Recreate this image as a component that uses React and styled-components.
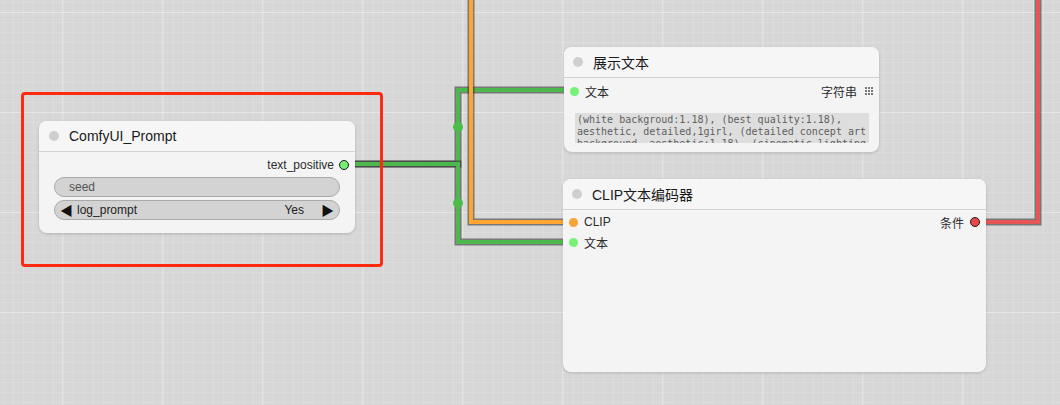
import React from "react";
import styled, { createGlobalStyle } from "styled-components";

const GlobalStyle = createGlobalStyle`
  html, body {
    margin: 0;
    padding: 0;
    overflow: hidden;
  }
  body {
    font-family: "Liberation Sans", "Noto Sans CJK SC", sans-serif;
  }
`;

const Canvas = styled.div`
  position: relative;
  width: 1060px;
  height: 405px;
  overflow: hidden;
  background-color: #d7d7d7;
  background-image:
    linear-gradient(to right, rgba(255, 255, 255, 0.28) 1px, transparent 1px),
    linear-gradient(to bottom, rgba(255, 255, 255, 0.28) 1px, transparent 1px),
    linear-gradient(to right, rgba(255, 255, 255, 0.12) 1px, transparent 1px),
    linear-gradient(to bottom, rgba(255, 255, 255, 0.12) 1px, transparent 1px);
  background-size: 100px 100px, 100px 100px, 10px 10px, 10px 10px;
  background-position: 62px 12px, 62px 12px, 3px 2px, 3px 2px;
`;

const Wires = styled.svg`
  position: absolute;
  left: 0;
  top: 0;
  width: 1060px;
  height: 405px;
`;

const Node = styled.div`
  position: absolute;
  left: ${(p) => p.$x}px;
  top: ${(p) => p.$y}px;
  width: ${(p) => p.$w}px;
  height: ${(p) => p.$h}px;
  display: flex;
  flex-direction: column;
  background: #f4f4f4;
  border-radius: 8px;
  box-shadow: 0 1px 3px rgba(0, 0, 0, 0.18);
  overflow: hidden;
`;

const Header = styled.div`
  height: 30px;
  flex: none;
  display: flex;
  align-items: center;
  gap: 10px;
  padding-left: ${(p) => p.$pad || 9}px;
  background: #f6f6f6;
  border-bottom: 1px solid #d2d2d2;
  font-size: 14px;
  color: #1a1a1a;
`;

const TitleDot = styled.span`
  width: 10px;
  height: 10px;
  border-radius: 50%;
  background: #cfcfcf;
`;

const Body = styled.div`
  display: flex;
  flex-direction: column;
  padding: ${(p) => p.$top || 3}px 0 0;
`;

const SlotRow = styled.div`
  height: 20px;
  display: flex;
  align-items: center;
  justify-content: space-between;
  font-size: 12px;
  color: #2b2b2b;
`;

const Slot = styled.div`
  display: flex;
  align-items: center;
  gap: ${(p) => p.$gap || 6}px;
  padding: 0 ${(p) => (p.$right ? 6 : 0)}px 0 ${(p) => (p.$right ? 0 : 6)}px;
`;

const Dot = styled.span`
  width: ${(p) => (p.$out ? 8 : 9)}px;
  height: ${(p) => (p.$out ? 8 : 9)}px;
  border-radius: 50%;
  background: ${(p) => p.$color};
  border: ${(p) => (p.$out ? "1px solid #1e1e1e" : "none")};
`;

const GridIcon = styled.span`
  display: grid;
  grid-template-columns: repeat(3, 2px);
  gap: 1px;
  margin-left: 2px;
  span {
    width: 2px;
    height: 2px;
    background: #777;
  }
`;

const Widgets = styled.div`
  display: flex;
  flex-direction: column;
  gap: 3px;
  padding: 2px 15px 0;
`;

const Widget = styled.div`
  height: 20px;
  box-sizing: border-box;
  display: flex;
  align-items: center;
  justify-content: space-between;
  padding: 0 ${(p) => (p.$combo ? 5 : 14)}px;
  border-radius: 10px;
  background: #d3d3d3;
  border: 1px solid #a9a9a9;
  font-size: 12px;
  color: ${(p) => (p.$combo ? "#222" : "#555")};
`;

const Arrow = styled.span`
  font-size: 13px;
  line-height: 1;
  color: #111;
`;

const ComboSide = styled.span`
  display: flex;
  align-items: center;
  gap: ${(p) => p.$gap}px;
`;

const TextArea = styled.div`
  margin: 12px 10px 0 11px;
  height: 29px;
  overflow: hidden;
  background: #dedede;
  padding: 1px 2px 0;
  font-family: "DejaVu Sans Mono", "Liberation Mono", monospace;
  font-size: 10px;
  line-height: 12px;
  color: #5e5e5e;
  white-space: pre;
`;

const Highlight = styled.div`
  position: absolute;
  left: 21px;
  top: 92px;
  width: 362px;
  height: 175px;
  box-sizing: border-box;
  border: 3px solid #ff2a10;
  border-radius: 4px;
`;

const Wire = ({ d, color }) => (
  <g fill="none" strokeLinejoin="miter">
    <path d={d} stroke="rgba(40,40,40,0.55)" strokeWidth="7" />
    <path d={d} stroke={color} strokeWidth="4" />
  </g>
);

const GREEN = "#4db84d";
const ORANGE = "#ffa531";
const RED = "#e55757";

export default function App() {
  return (
    <>
      <GlobalStyle />
      <Canvas>
        <Wires viewBox="0 0 1060 405">
          <Wire d="M350 164 H458 V90 H574" color={GREEN} />
          <Wire d="M350 164 H458 V242 H572" color={GREEN} />
          <Wire d="M471 -5 V222 H572" color={ORANGE} />
          <Wire d="M976 222 H1038 V-5" color={RED} />
          <circle cx="458" cy="127" r="5" fill="#4cbc4c" />
          <circle cx="458" cy="203" r="5" fill="#4cbc4c" />
        </Wires>

        <Node $x={39} $y={121} $w={316} $h={112}>
          <Header $pad={10}>
            <TitleDot />
            ComfyUI_Prompt
          </Header>
          <Body>
            <SlotRow>
              <span />
              <Slot $right $gap={5}>
                text_positive
                <Dot $out $color="#74ee74" />
              </Slot>
            </SlotRow>
            <Widgets>
              <Widget>seed</Widget>
              <Widget $combo>
                <ComboSide $gap={4}>
                  <Arrow>◀</Arrow>log_prompt
                </ComboSide>
                <ComboSide $gap={17}>
                  Yes<Arrow>▶</Arrow>
                </ComboSide>
              </Widget>
            </Widgets>
          </Body>
        </Node>

        <Node $x={564} $y={47} $w={315} $h={105}>
          <Header>
            <TitleDot />
            展示文本
          </Header>
          <Body>
            <SlotRow>
              <Slot $gap={6}>
                <Dot $color="#76f276" />
                文本
              </Slot>
              <Slot $right $gap={6}>
                字符串
                <GridIcon>
                  {Array.from({ length: 9 }).map((_, i) => (
                    <span key={i} />
                  ))}
                </GridIcon>
              </Slot>
            </SlotRow>
            <TextArea>
              {"(white backgroud:1.18), (best quality:1.18),\naesthetic, detailed,1girl, (detailed concept art\nbackground, aesthetic:1.18), (cinematic lighting, 8k"}
            </TextArea>
          </Body>
        </Node>

        <Node $x={563} $y={179} $w={423} $h={193}>
          <Header>
            <TitleDot />
            CLIP文本编码器
          </Header>
          <Body $top={2}>
            <SlotRow>
              <Slot $gap={6}>
                <Dot $color="#f5a531" />
                CLIP
              </Slot>
              <Slot $right $gap={6}>
                条件
                <Dot $out $color="#e84848" />
              </Slot>
            </SlotRow>
            <SlotRow>
              <Slot $gap={6}>
                <Dot $color="#76f276" />
                文本
              </Slot>
            </SlotRow>
          </Body>
        </Node>

        <Highlight />
      </Canvas>
    </>
  );
}
